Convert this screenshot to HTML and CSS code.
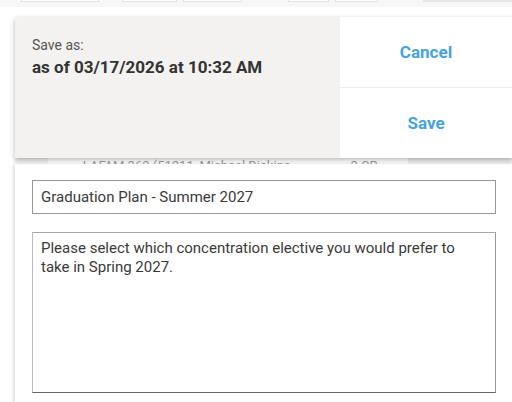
FILE: index.html
```html
<!DOCTYPE html>
<html>
<head>
<meta charset="utf-8">
<link rel="stylesheet" href="styles.css">
</head>
<body>
<div class="topstrip">
  <span class="tbox b1"></span>
  <span class="tbox b2"></span>
  <span class="tbox b3"></span>
  <span class="tbox b4"></span>
  <span class="tbox b5"></span>
  <span class="tbar"></span>
</div>
<div class="gap"></div>
<div class="card">
  <div class="card-info">
    <div class="label">Save as:</div>
    <div class="value">as of 03/17/2026 at 10:32 AM</div>
  </div>
  <div class="card-actions">
    <button class="action">Cancel</button>
    <button class="action">Save</button>
  </div>
</div>
<div class="bgrow">
  <span class="bg-lead"></span>
  <span class="bg-course">LAFAM 362 (51211, Michael Dickins</span>
  <span class="bg-cr">3 CR</span>
  <span class="bg-bar"></span>
</div>
<div class="panel">
  <input class="field" type="text" value="Graduation Plan - Summer 2027">
  <textarea class="note">Please select which concentration elective you would prefer to take in Spring 2027.</textarea>
</div>
</body>
</html>
```
FILE: styles.css
```css
* { box-sizing: border-box; }
html, body { margin: 0; padding: 0; background: #fff; }
body {
  font-family: Roboto, "Noto Sans", sans-serif;
  width: 512px;
  height: 402px;
  overflow: hidden;
}
.topstrip {
  height: 7px;
  background: #f7f7f7;
  display: flex;
  align-items: flex-start;
}
.tbox {
  display: block;
  height: 2px;
  background: #fff;
  border: 1px solid #e2e2e2;
  border-top: none;
}
.b1 { margin-left: 21px; width: 78px; }
.b2 { margin-left: 23px; width: 55px; }
.b3 { margin-left: 6px; width: 59px; }
.b4 { margin-left: 46px; width: 41px; }
.b5 { margin-left: 6px; width: 43px; }
.tbar { margin-left: 45px; flex: 1; height: 2px; background: #e6e6e6; }
.gap { height: 10px; }
.card {
  position: relative;
  z-index: 2;
  margin-left: 15px;
  height: 141px;
  display: flex;
  box-shadow: 0 2px 5px rgba(0,0,0,0.28);
}
.card-info {
  width: 325px;
  background: #f3f2f0;
  padding: 20px 17px;
}
.label {
  font-size: 14px;
  color: #555;
  line-height: 17px;
}
.value {
  margin-top: 2px;
  font-size: 17px;
  font-weight: bold;
  color: #333;
  line-height: 22px;
}
.card-actions {
  flex: 1;
  display: flex;
  flex-direction: column;
  background: #fff;
}
.action {
  flex: 1;
  border: none;
  background: #fff;
  font-family: inherit;
  font-size: 17px;
  font-weight: bold;
  color: #47a3df;
  padding: 0;
}
.action + .action { border-top: 1px solid #ececec; }
.bgrow {
  height: 6px;
  margin-left: 15px;
  overflow: hidden;
  display: flex;
  align-items: flex-start;
  background: #fff;
}
.bg-lead { width: 33px; height: 6px; background: #f0f0f0; }
.bg-course {
  margin-left: 35px;
  width: 269px;
  font-size: 13px;
  line-height: 13px;
  margin-top: 1px;
  color: #999;
  white-space: nowrap;
}
.bg-cr {
  font-size: 13px;
  line-height: 13px;
  margin-top: 1px;
  color: #999;
  white-space: nowrap;
}
.bg-bar { margin-left: 30px; width: 105px; height: 6px; background: #ececec; }
.panel {
  margin-left: 15px;
  height: 240px;
  background: #fff;
  padding: 16px 16px 0 17px;
  box-shadow: -2px 0 3px rgba(0,0,0,0.12);
  display: flex;
  flex-direction: column;
  gap: 18px;
}
.field {
  display: block;
  width: 464px;
  height: 34px;
  border: 1px solid #999;
  padding: 0 8px;
  font-family: inherit;
  font-size: 15px;
  color: #3a3a3a;
  outline: none;
}
.note {
  display: block;
  width: 464px;
  height: 161px;
  border: 1px solid;
  border-color: #aaa #999 #666 #bbb;
  padding: 6px 8px;
  font-family: inherit;
  font-size: 15px;
  line-height: 19px;
  color: #3a3a3a;
  resize: none;
  outline: none;
  overflow: hidden;
}
```
